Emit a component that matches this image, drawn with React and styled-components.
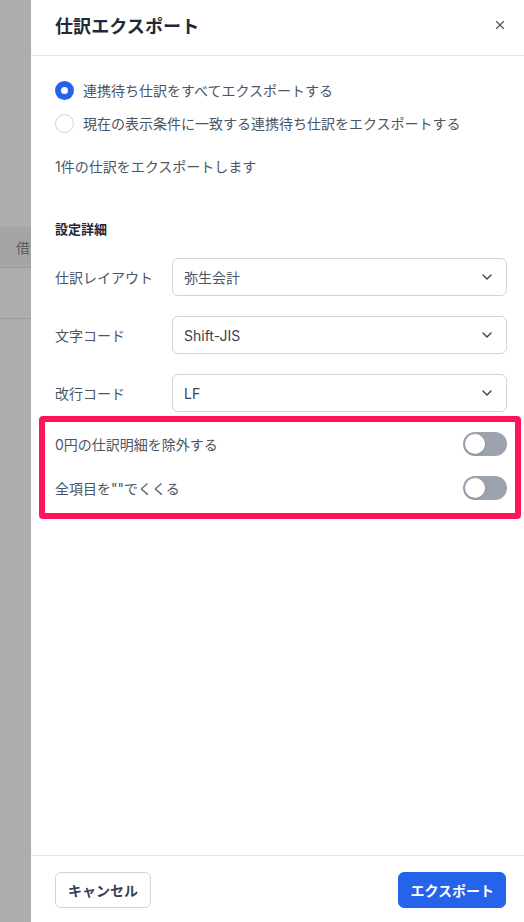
import React, { useState } from "react";
import styled, { createGlobalStyle } from "styled-components";
import { ChevronDown, X } from "lucide-react";

const Global = createGlobalStyle`
  * { box-sizing: border-box; }
  html, body { margin: 0; padding: 0; height: 100%; overflow: hidden; }
  body { font-family: "Inter", "Noto Sans CJK JP", sans-serif; }
  #root { height: 100%; }
`;

const Page = styled.div`
  display: flex;
  height: 922px;
  width: 524px;
`;

const Backdrop = styled.div`
  flex: 1;
  background: #adadad;
  display: flex;
  flex-direction: column;
  padding-top: 227px;
  overflow: hidden;
`;

const BackRow = styled.div`
  height: ${(p) => p.$h}px;
  background: ${(p) => (p.$head ? "#a5a5a5" : "transparent")};
  border-bottom: 1px solid #9b9b9b;
  display: flex;
  align-items: center;
  padding-left: 16px;
  font-size: 14px;
  color: #5c5c5c;
  white-space: nowrap;
`;

const Drawer = styled.div`
  width: 493px;
  background: #fff;
  display: flex;
  flex-direction: column;
`;

const Header = styled.div`
  height: 56px;
  border-bottom: 1px solid #e5e7eb;
  display: flex;
  align-items: center;
  justify-content: space-between;
  padding: 0 17px 6px 24px;
`;

const Title = styled.h2`
  margin: 0;
  font-size: 18px;
  font-weight: 600;
  color: #1f2937;
  letter-spacing: 0.1px;
`;

const CloseBtn = styled.button`
  border: none;
  background: none;
  padding: 0;
  display: flex;
  color: #4b5563;
  cursor: pointer;
`;

const Body = styled.div`
  flex: 1;
  padding: 23px 17px 0 24px;
  display: flex;
  flex-direction: column;
`;

const RadioGroup = styled.div`
  display: flex;
  flex-direction: column;
  gap: 11px;
`;

const RadioRow = styled.label`
  display: flex;
  align-items: center;
  gap: 9px;
  height: 22px;
  font-size: 14px;
  color: #4b5563;
  cursor: pointer;
`;

const RadioDot = styled.span`
  width: 19px;
  height: 19px;
  border-radius: 50%;
  flex-shrink: 0;
  background: ${(p) => (p.$on ? "#2563eb" : "#fff")};
  border: ${(p) => (p.$on ? "none" : "1px solid #d1d5db")};
  display: flex;
  align-items: center;
  justify-content: center;
  &::after {
    content: "";
    width: 7px;
    height: 7px;
    border-radius: 50%;
    background: #fff;
    display: ${(p) => (p.$on ? "block" : "none")};
  }
`;

const Note = styled.p`
  margin: 23px 0 0;
  font-size: 14px;
  line-height: 20px;
  color: #4b5563;
`;

const SectionTitle = styled.h3`
  margin: 42px 0 19px;
  font-size: 13px;
  line-height: 20px;
  font-weight: 700;
  color: #1f2937;
`;

const Fields = styled.div`
  display: flex;
  flex-direction: column;
  gap: 20px;
`;

const FieldRow = styled.div`
  display: grid;
  grid-template-columns: 117px 1fr;
  align-items: center;
`;

const Label = styled.span`
  font-size: 14px;
  color: #4b5563;
`;

const Select = styled.div`
  height: 38px;
  border: 1px solid #d1d5db;
  border-radius: 6px;
  display: flex;
  align-items: center;
  justify-content: space-between;
  padding: 0 11px 0 11px;
  font-size: 14px;
  color: ${(p) => (p.$dark ? "#374151" : "#4b5563")};
  background: #fff;
`;

const Highlight = styled.div`
  margin: 4px -14px 0 -16px;
  border: 6px solid #ff145a;
  border-radius: 4px;
  padding: 0 8px 3px 10px;
  display: flex;
  flex-direction: column;
`;

const ToggleRow = styled.div`
  height: 44px;
  display: flex;
  align-items: center;
  justify-content: space-between;
`;

const Toggle = styled.button`
  width: 44px;
  height: 24px;
  border-radius: 12px;
  border: none;
  padding: 2px;
  background: ${(p) => (p.$on ? "#2563eb" : "#9ca3af")};
  display: flex;
  justify-content: ${(p) => (p.$on ? "flex-end" : "flex-start")};
  cursor: pointer;
  &::after {
    content: "";
    width: 20px;
    height: 20px;
    border-radius: 50%;
    background: #fff;
    box-shadow: 0 1px 2px rgba(0,0,0,0.15);
  }
`;

const Footer = styled.div`
  height: 67px;
  border-top: 1px solid #e5e7eb;
  display: flex;
  align-items: center;
  justify-content: space-between;
  padding: 1px 18px 0 24px;
`;

const Button = styled.button`
  height: 36px;
  padding: 0 ${(p) => (p.$primary ? 11 : 12)}px;
  border-radius: 6px;
  font-family: inherit;
  font-size: 14px;
  font-weight: 700;
  cursor: pointer;
  border: 1px solid ${(p) => (p.$primary ? "#2563eb" : "#d1d5db")};
  background: ${(p) => (p.$primary ? "#2563eb" : "#fff")};
  color: ${(p) => (p.$primary ? "#fff" : "#374151")};
`;

export default function App() {
  const [mode, setMode] = useState(0);
  const [t1, setT1] = useState(false);
  const [t2, setT2] = useState(false);
  const fields = [
    { label: "仕訳レイアウト", value: "弥生会計" },
    { label: "文字コード", value: "Shift-JIS", dark: true },
    { label: "改行コード", value: "LF", dark: true },
  ];
  return (
    <>
      <Global />
      <Page>
        <Backdrop>
          <BackRow $head $h={41}>借方勘定科目</BackRow>
          <BackRow $h={51} />
        </Backdrop>
        <Drawer>
          <Header>
            <Title>仕訳エクスポート</Title>
            <CloseBtn aria-label="閉じる">
              <X size={14} strokeWidth={2} />
            </CloseBtn>
          </Header>
          <Body>
            <RadioGroup>
              <RadioRow onClick={() => setMode(0)}>
                <RadioDot $on={mode === 0} />
                連携待ち仕訳をすべてエクスポートする
              </RadioRow>
              <RadioRow onClick={() => setMode(1)}>
                <RadioDot $on={mode === 1} />
                現在の表示条件に一致する連携待ち仕訳をエクスポートする
              </RadioRow>
            </RadioGroup>
            <Note>1件の仕訳をエクスポートします</Note>
            <SectionTitle>設定詳細</SectionTitle>
            <Fields>
              {fields.map((f) => (
                <FieldRow key={f.label}>
                  <Label>{f.label}</Label>
                  <Select $dark={f.dark}>
                    {f.value}
                    <ChevronDown size={16} strokeWidth={2} color="#374151" />
                  </Select>
                </FieldRow>
              ))}
            </Fields>
            <Highlight>
              <ToggleRow>
                <Label>0円の仕訳明細を除外する</Label>
                <Toggle $on={t1} onClick={() => setT1(!t1)} />
              </ToggleRow>
              <ToggleRow>
                <Label>全項目を""でくくる</Label>
                <Toggle $on={t2} onClick={() => setT2(!t2)} />
              </ToggleRow>
            </Highlight>
          </Body>
          <Footer>
            <Button>キャンセル</Button>
            <Button $primary>エクスポート</Button>
          </Footer>
        </Drawer>
      </Page>
    </>
  );
}
